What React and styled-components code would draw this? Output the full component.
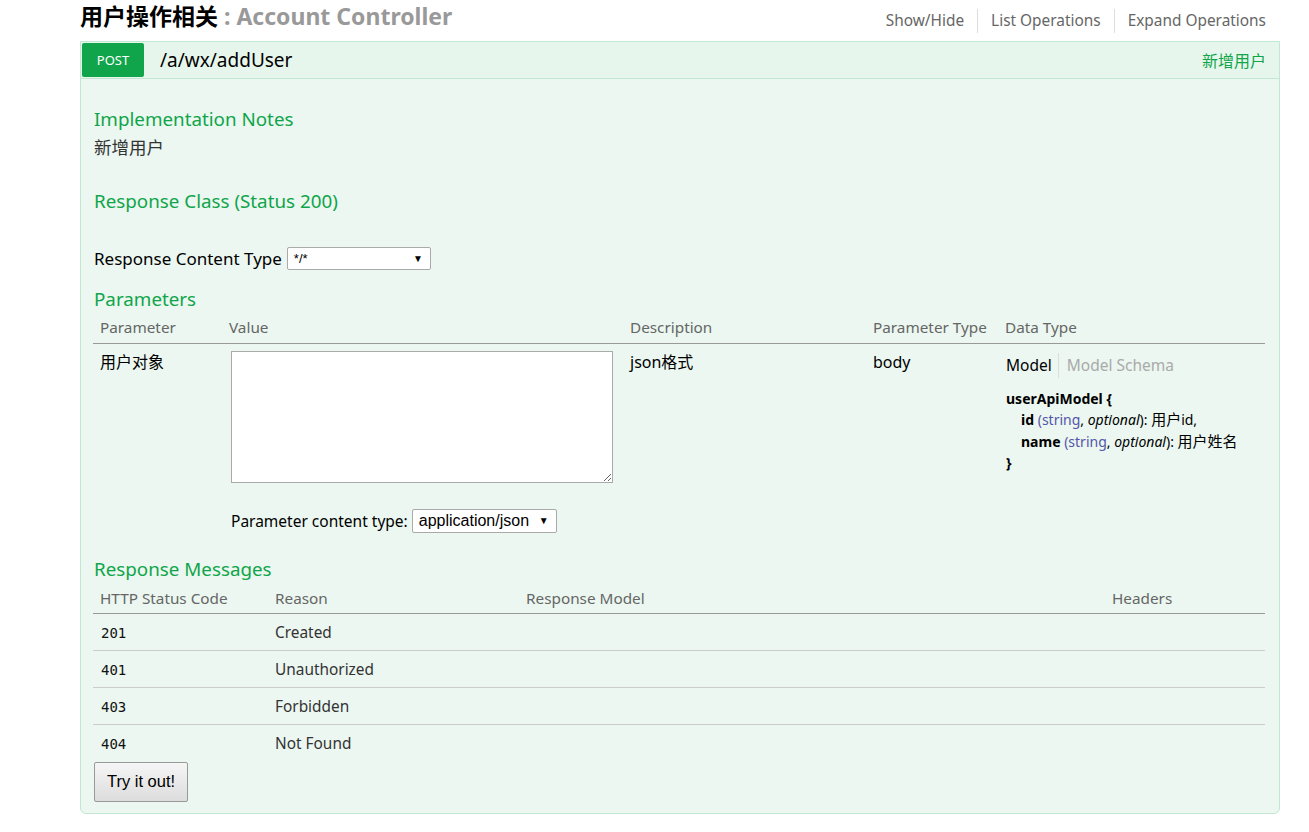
import React from "react";
import styled, { createGlobalStyle } from "styled-components";

const Global = createGlobalStyle`
  html, body { margin: 0; padding: 0; background: #fff; }
  body { font-family: "Noto Sans", "Open Sans", "Noto Sans CJK SC", sans-serif; color: #000; }
  * { box-sizing: border-box; }
`;

const Wrap = styled.div`
  width: 1200px;
  margin-left: 80px;
`;

const Header = styled.div`
  display: flex;
  justify-content: space-between;
  align-items: flex-start;
  height: 41px;
`;

const Title = styled.h2`
  margin: 0;
  font-size: 23px;
  line-height: 32px;
  font-weight: 700;
  color: #000;
  font-family: "Noto Sans", "Noto Sans CJK SC", sans-serif;
  span { color: #999; }
`;

const Links = styled.ul`
  list-style: none;
  margin: 9px 14px 0 0;
  padding: 0;
  display: flex;
  align-items: center;
`;

const LinkItem = styled.li`
  font-size: 15.4px;
  line-height: 24px;
  color: #666;
  padding: 0 13px;
  border-left: ${(p) => (p.$first ? "none" : "1px solid #ddd")};
  &:last-child { padding-right: 0; }
`;

const Op = styled.div`
  border: 1px solid #c3e8d1;
  border-radius: 0 0 6px 6px;
  background: #ebf7f0;
`;

const OpHeading = styled.div`
  display: flex;
  align-items: center;
  padding: 1px 13px 1px 1px;
  background: #e7f6ec;
  border-bottom: 1px solid #c3e8d1;
`;

const Method = styled.span`
  display: inline-flex;
  align-items: center;
  justify-content: center;
  width: 62px;
  height: 34px;
  background: #10a54a;
  color: #fff;
  font-size: 13px;
  border-radius: 2px;
`;

const Path = styled.span`
  margin-left: 16px;
  font-size: 19px;
  color: #000;
  flex: 1;
`;

const Summary = styled.span`
  font-size: 16px;
  color: #10a54a;
  font-family: "Noto Sans CJK SC", sans-serif;
`;

const Content = styled.div`
  padding: 28px 14px 11px 13px;
`;

const H4 = styled.h4`
  margin: ${(p) => p.$mt || 0}px 0 0 0;
  font-size: 18.8px;
  line-height: 24px;
  font-weight: 400;
  color: #10a54a;
`;

const Note = styled.div`
  margin-top: 5px;
  font-size: 17.5px;
  line-height: 22px;
  color: #333;
  font-family: "Noto Sans CJK SC", sans-serif;
`;

const Inline = styled.div`
  display: flex;
  align-items: center;
  margin-top: ${(p) => p.$mt || 0}px;
  font-size: 17px;
  line-height: 22px;
  color: #000;
`;

const Select = styled.div`
  display: inline-flex;
  align-items: center;
  justify-content: space-between;
  width: ${(p) => p.$w}px;
  height: ${(p) => p.$h}px;
  margin-left: ${(p) => p.$ml || 0}px;
  padding: 0 7px 0 6px;
  background: #fff;
  border: 1px solid #aaa;
  border-radius: 2px;
  font-family: "Liberation Sans", Arial, sans-serif;
  font-size: ${(p) => p.$fs}px;
  color: #000;
`;

const Arrow = styled.span`
  font-size: 10px;
  color: #000;
`;

const Table = styled.table`
  width: calc(100% + 1px);
  margin-left: -1px;
  margin-top: ${(p) => p.$mt || 2}px;
  border-collapse: collapse;
  table-layout: fixed;
  th {
    text-align: left;
    font-weight: 400;
    font-size: 15.3px;
    color: #666;
    padding: 6px 7px 6px;
    line-height: 17px;
    border-bottom: 1px solid #999;
    height: 30px;
  }
`;

const ParamCell = styled.td`
  vertical-align: top;
  padding: 7px 7px 24px;
  font-size: 16px;
  line-height: 22px;
  color: #000;
  font-family: "Noto Sans", "Noto Sans CJK SC", sans-serif;
`;

const TextArea = styled.textarea`
  display: block;
  width: 382px;
  height: 132px;
  margin: 0 0 0 2px;
  border: 1px solid #aaa;
  background: #fff;
  resize: vertical;
`;

const ContentType = styled.div`
  display: flex;
  align-items: center;
  margin: 26px 0 0 2px;
  font-size: 15.5px;
`;

const Tabs = styled.div`
  display: flex;
  align-items: center;
  margin-top: 2px;
  height: 25px;
`;

const Tab = styled.span`
  font-size: 15.5px;
  color: ${(p) => (p.$active ? "#000" : "#aaa")};
  padding: ${(p) => (p.$active ? "0 6px 0 1px" : "0 0 0 8px")};
  border-left: ${(p) => (p.$active ? "none" : "1px solid #ddd")};
  line-height: 25px;
`;

const ModelSig = styled.div`
  margin-top: 10px;
  margin-left: 1px;
  font-size: 14px;
  line-height: 21.5px;
  font-family: "Noto Sans", "Noto Sans CJK SC", sans-serif;
  b { font-weight: 700; }
  i { font-style: italic; }
`;

const Cjk = styled.span`
  font-size: 15px;
`;

const Prop = styled.div`
  padding-left: 15px;
`;

const TypeName = styled.span`
  color: #55a;
`;

const RespRow = styled.tr`
  height: 37px;
  border-bottom: ${(p) => (p.$last ? "none" : "1px solid #ccc")};
  td {
    padding: 1px 7px 0;
    font-size: 15.4px;
    color: #333;
    vertical-align: middle;
  }
`;

const Code = styled.td`
  && {
    font-family: "DejaVu Sans Mono", monospace;
    font-size: 14px;
    color: #111;
    padding-left: 8px;
  }
`;

const TryButton = styled.button`
  display: block;
  width: 94px;
  height: 40px;
  margin: 0;
  font-family: "Liberation Sans", Arial, sans-serif;
  font-size: 16.5px;
  color: #000;
  background: linear-gradient(#f6f6f6, #dcdcdc);
  border: 1px solid #999;
  border-radius: 2px;
`;

export default function App() {
  const responses = [
    ["201", "Created"],
    ["401", "Unauthorized"],
    ["403", "Forbidden"],
    ["404", "Not Found"],
  ];
  return (
    <>
      <Global />
      <Wrap>
        <Header>
          <Title>
            用户操作相关 <span>: Account Controller</span>
          </Title>
          <Links>
            <LinkItem $first>Show/Hide</LinkItem>
            <LinkItem>List Operations</LinkItem>
            <LinkItem>Expand Operations</LinkItem>
          </Links>
        </Header>
        <Op>
          <OpHeading>
            <Method>POST</Method>
            <Path>/a/wx/addUser</Path>
            <Summary>新增用户</Summary>
          </OpHeading>
          <Content>
            <H4>Implementation Notes</H4>
            <Note>新增用户</Note>
            <H4 $mt={31}>Response Class (Status 200)</H4>
            <Inline $mt={34}>
              Response Content Type
              <Select $w={144} $h={23} $fs={13} $ml={5}>
                <span>*/*</span>
                <Arrow>▼</Arrow>
              </Select>
            </Inline>
            <H4 $mt={17}>Parameters</H4>
            <Table>
              <colgroup>
                <col style={{ width: 129 }} />
                <col style={{ width: 401 }} />
                <col style={{ width: 243 }} />
                <col style={{ width: 132 }} />
                <col />
              </colgroup>
              <thead>
                <tr>
                  <th>Parameter</th>
                  <th>Value</th>
                  <th>Description</th>
                  <th>Parameter Type</th>
                  <th>Data Type</th>
                </tr>
              </thead>
              <tbody>
                <tr>
                  <ParamCell>用户对象</ParamCell>
                  <ParamCell>
                    <TextArea />
                    <ContentType>
                      Parameter content type:
                      <Select $w={145} $h={24} $fs={16} $ml={4}>
                        <span>application/json</span>
                        <Arrow>▼</Arrow>
                      </Select>
                    </ContentType>
                  </ParamCell>
                  <ParamCell>json格式</ParamCell>
                  <ParamCell>body</ParamCell>
                  <ParamCell>
                    <Tabs>
                      <Tab $active>Model</Tab>
                      <Tab>Model Schema</Tab>
                    </Tabs>
                    <ModelSig>
                      <b>userApiModel {"{"}</b>
                      <Prop>
                        <b>id</b> <TypeName>(string</TypeName>, <i>optional</i>): <Cjk>用户</Cjk>id,
                      </Prop>
                      <Prop>
                        <b>name</b> <TypeName>(string</TypeName>, <i>optional</i>): <Cjk>用户姓名</Cjk>
                      </Prop>
                      <b>{"}"}</b>
                    </ModelSig>
                  </ParamCell>
                </tr>
              </tbody>
            </Table>
            <H4 $mt={0}>Response Messages</H4>
            <Table $mt={3}>
              <colgroup>
                <col style={{ width: 175 }} />
                <col style={{ width: 251 }} />
                <col style={{ width: 586 }} />
                <col />
              </colgroup>
              <thead>
                <tr>
                  <th>HTTP Status Code</th>
                  <th>Reason</th>
                  <th>Response Model</th>
                  <th>Headers</th>
                </tr>
              </thead>
              <tbody>
                {responses.map(([c, r], i) => (
                  <RespRow key={c} $last={i === responses.length - 1}>
                    <Code>{c}</Code>
                    <td>{r}</td>
                    <td />
                    <td />
                  </RespRow>
                ))}
              </tbody>
            </Table>
            <TryButton>Try it out!</TryButton>
          </Content>
        </Op>
      </Wrap>
    </>
  );
}
